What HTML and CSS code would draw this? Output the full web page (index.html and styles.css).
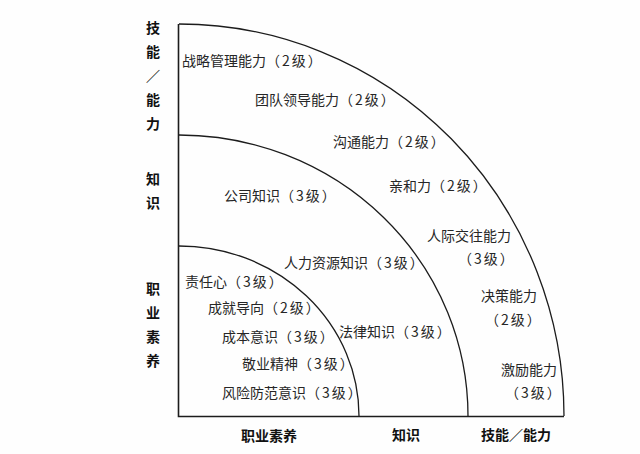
FILE: index.html
```html
<!DOCTYPE html>
<html lang="zh-CN">
<head>
<meta charset="utf-8">
<title>能力模型</title>
<link rel="stylesheet" href="styles.css">
</head>
<body>
<div class="chart">
  <svg class="lines" width="640" height="454" viewBox="0 0 640 454" xmlns="http://www.w3.org/2000/svg">
    <path d="M178.5,24 L178.5,416.5 L564,416.5" fill="none" stroke="#1c1c1c" stroke-width="1.6"/>
    <path d="M179,24 A385,392 0 0 1 564,416" fill="none" stroke="#1c1c1c" stroke-width="1.3"/>
    <path d="M179,135 A289,281 0 0 1 468,416" fill="none" stroke="#1c1c1c" stroke-width="1.3"/>
    <path d="M179,246 A180,170 0 0 1 359,416" fill="none" stroke="#1c1c1c" stroke-width="1.3"/>
  </svg>

  <div class="axis-v av1">技<br>能<br>／<br>能<br>力</div>
  <div class="axis-v av2">知<br>识</div>
  <div class="axis-v av3">职<br>业<br>素<br>养</div>

  <div class="axis-h ah1">职业素养</div>
  <div class="axis-h ah2">知识</div>
  <div class="axis-h ah3">技能／能力</div>

  <div class="lbl s1">战略管理能力<span class="lv">（2级）</span></div>
  <div class="lbl s2">团队领导能力<span class="lv">（2级）</span></div>
  <div class="lbl s3">沟通能力<span class="lv">（2级）</span></div>
  <div class="lbl s4">亲和力<span class="lv">（2级）</span></div>
  <div class="lbl s5">人际交往能力</div>
  <div class="lbl s6"><span class="lv">（3级）</span></div>
  <div class="lbl s7">决策能力</div>
  <div class="lbl s8"><span class="lv">（2级）</span></div>
  <div class="lbl s9">激励能力</div>
  <div class="lbl s10"><span class="lv">（3级）</span></div>

  <div class="lbl k1">公司知识<span class="lv">（3级）</span></div>
  <div class="lbl k2">人力资源知识<span class="lv">（3级）</span></div>
  <div class="lbl k3">法律知识<span class="lv">（3级）</span></div>

  <div class="lbl p1">责任心<span class="lv">（3级）</span></div>
  <div class="lbl p2">成就导向<span class="lv">（2级）</span></div>
  <div class="lbl p3">成本意识<span class="lv">（3级）</span></div>
  <div class="lbl p4">敬业精神<span class="lv">（3级）</span></div>
  <div class="lbl p5">风险防范意识<span class="lv">（3级）</span></div>
</div>
</body>
</html>
```

FILE: styles.css
```css
html, body {
  margin: 0;
  padding: 0;
  background: #ffffff;
}

.chart {
  position: relative;
  width: 640px;
  height: 454px;
  overflow: hidden;
  background: #fefefe;
  font-family: "Noto Sans CJK SC", "Noto Sans", sans-serif;
  color: #222222;
}

.lines {
  position: absolute;
  left: 0;
  top: 0;
}

.lbl {
  position: absolute;
  font-size: 14px;
  line-height: 14px;
  white-space: nowrap;
  color: #262626;
}

.lv {
  letter-spacing: 2px;
}

.axis-v {
  position: absolute;
  left: 143px;
  width: 20px;
  text-align: center;
  font-size: 14px;
  line-height: 24px;
  font-weight: 700;
  color: #111111;
}

.axis-h {
  position: absolute;
  font-size: 14px;
  line-height: 14px;
  font-weight: 700;
  white-space: nowrap;
  color: #111111;
}

.av1 { top: 15px; }
.av2 { top: 166px; }
.av3 { top: 276px; }

.ah1 { left: 241px; top: 428px; }
.ah2 { left: 392px; top: 427px; }
.ah3 { left: 481px; top: 427px; }

.s1 { left: 182px; top: 53px; }
.s2 { left: 255px; top: 92px; }
.s3 { left: 333px; top: 134px; }
.s4 { left: 389px; top: 178px; }
.s5 { left: 427px; top: 228px; }
.s6 { left: 458px; top: 251px; }
.s7 { left: 481px; top: 288px; }
.s8 { left: 485px; top: 312px; }
.s9 { left: 501px; top: 362px; }
.s10 { left: 505px; top: 385px; }

.k1 { left: 224px; top: 188px; }
.k2 { left: 284px; top: 255px; }
.k3 { left: 339px; top: 324px; }

.p1 { left: 185px; top: 274px; }
.p2 { left: 208px; top: 300px; }
.p3 { left: 222px; top: 329px; }
.p4 { left: 242px; top: 356px; }
.p5 { left: 222px; top: 385px; }
```
